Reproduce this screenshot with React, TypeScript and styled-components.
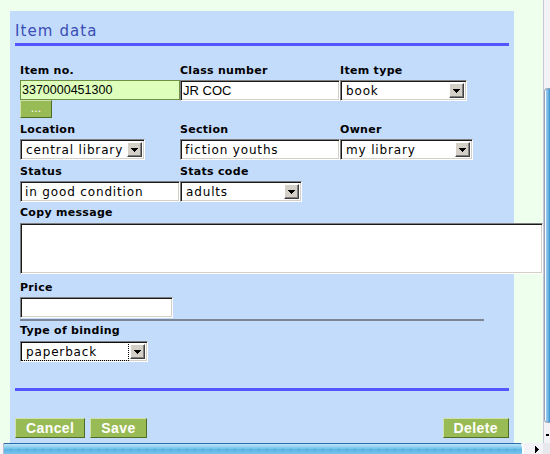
import React from "react";
import styled, { createGlobalStyle, css } from "styled-components";

const GlobalStyle = createGlobalStyle`
  html, body {
    margin: 0;
    padding: 0;
    background: #eeffee;
  }
  body {
    font-family: "DejaVu Sans", Verdana, sans-serif;
  }
`;

// classic sunken 2px field border
const inset = css`
  border: 1px solid;
  border-color: #808080 #ffffff #ffffff #808080;
  box-shadow: inset 1px 1px 0 #1a1a1a, inset -1px -1px 0 #d4d0c8;
`;

const Window = styled.div`
  display: grid;
  grid-template-columns: 543px 7px;
  grid-template-rows: 443px 11px;
  width: 550px;
  height: 454px;
  overflow: hidden;
`;

const Viewport = styled.div`
  overflow: hidden;
  background: #eeffee;
  padding: 11px 0 0 10px;
`;

const Panel = styled.div`
  width: 504px;
  min-height: 460px;
  box-sizing: border-box;
  padding: 11px 5px 0;
  background: #c4dcfc;
`;

const Title = styled.h2`
  margin: 0;
  height: 18px;
  font: normal 15px/18px "DejaVu Sans", Verdana, sans-serif;
  letter-spacing: 1.1px;
  color: #3a4db3;
`;

const Rule = styled.div<{ $top: number }>`
  height: 3px;
  margin-top: ${(p) => p.$top}px;
  background: #5555ff;
`;

const Form = styled.div`
  display: flex;
  flex-direction: column;
  padding: 0 5px;
`;

const Row = styled.div<{ $top: number }>`
  display: grid;
  grid-template-columns: 160px 160px 1fr;
  align-items: start;
  margin-top: ${(p) => p.$top}px;
`;

const Field = styled.div<{ $top?: number }>`
  display: flex;
  flex-direction: column;
  align-items: flex-start;
  margin-top: ${(p) => p.$top ?? 0}px;
`;

const Label = styled.label<{ $gap?: number }>`
  display: block;
  height: 13px;
  margin-bottom: ${(p) => p.$gap ?? 3}px;
  font: bold 11px/13px "DejaVu Sans", Verdana, sans-serif;
  letter-spacing: 0.3px;
  color: #000;
  white-space: nowrap;
`;

const TextInput = styled.input<{ $width: number; $arial?: boolean }>`
  width: ${(p) => p.$width}px;
  height: 21px;
  box-sizing: border-box;
  margin: 0;
  padding: 0 4px;
  ${inset};
  background: #fff;
  color: #000;
  outline: none;
  ${(p) =>
    p.$arial
      ? css`
          font: 13px "Liberation Sans", Arial, sans-serif;
          padding-left: 2px;
        `
      : css`
          font: 12px "DejaVu Sans", Verdana, sans-serif;
          letter-spacing: 0.85px;
        `}
`;

const ItemNoInput = styled(TextInput)`
  height: 20px;
  border: 1px solid #6f8f45;
  box-shadow: none;
  background: #ddffbb;
  font-size: 12.5px;
  padding-left: 1px;
`;

const TextArea = styled.textarea`
  width: 523px;
  height: 51px;
  box-sizing: border-box;
  margin: 0;
  ${inset};
  background: #fff;
  resize: none;
  outline: none;
`;

const Divider = styled.div`
  width: 464px;
  height: 2px;
  margin-top: 1px;
  background: #7b8596;
`;

const SelectBox = styled.div<{ $width: number }>`
  display: flex;
  align-items: center;
  width: ${(p) => p.$width}px;
  height: 21px;
  box-sizing: border-box;
  padding: 1px 2px 1px 1px;
  ${inset};
  background: #fff;
`;

const SelectValue = styled.span<{ $focused?: boolean }>`
  flex: 1;
  align-self: stretch;
  display: flex;
  align-items: center;
  padding-left: 4px;
  margin-right: 2px;
  font: 12px "DejaVu Sans", Verdana, sans-serif;
  letter-spacing: 0.85px;
  color: #000;
  white-space: nowrap;
  ${(p) =>
    p.$focused &&
    css`
      outline: 1px dotted #000;
      outline-offset: 0;
    `}
`;

const ArrowButton = styled.span`
  width: 15px;
  height: 15px;
  box-sizing: border-box;
  display: flex;
  align-items: center;
  justify-content: center;
  background: #d4d0c8;
  border: 1px solid;
  border-color: #ffffff #404040 #404040 #ffffff;
  box-shadow: inset -1px -1px 0 #808080;
`;

const DownArrow = () => (
  <svg width={7} height={4} viewBox="0 0 7 4" shapeRendering="crispEdges">
    <rect x="0" y="0" width="7" height="1" fill="#000" />
    <rect x="1" y="1" width="5" height="1" fill="#000" />
    <rect x="2" y="2" width="3" height="1" fill="#000" />
    <rect x="3" y="3" width="1" height="1" fill="#000" />
  </svg>
);

const Select = ({ value, width, focused }: { value: string; width: number; focused?: boolean }) => (
  <SelectBox $width={width}>
    <SelectValue $focused={focused}>{value}</SelectValue>
    <ArrowButton>
      <DownArrow />
    </ArrowButton>
  </SelectBox>
);

const GreenButton = styled.button<{ $push?: boolean }>`
  height: 20px;
  box-sizing: border-box;
  margin: 0;
  padding: 0 10px;
  background: #99bb55;
  color: #fff;
  font: bold 14px/18px "Liberation Sans", Arial, sans-serif;
  letter-spacing: 0.4px;
  border: 1px solid;
  border-color: #cfe0a8 #4f6b28 #4f6b28 #cfe0a8;
  cursor: pointer;
  ${(p) => p.$push && "margin-left: auto;"}
`;

const LookupButton = styled(GreenButton)`
  width: 32px;
  height: 18px;
  padding: 0;
  font: 11px/16px "DejaVu Sans", Verdana, sans-serif;
  letter-spacing: 0;
`;

const ButtonBar = styled.div`
  display: flex;
  gap: 5px;
  margin-top: 27px;
`;

/* window scrollbars (the page is cut off at the right and bottom) */

const VScroll = styled.div`
  display: flex;
  flex-direction: column;
  padding-top: 88px;
  background: linear-gradient(to right, #c6cad6 0 1px, #f3f3f7 1px);
`;

const VThumb = styled.div`
  height: 333px;
  margin-left: 1px;
  border: 1px solid #9aa4b8;
  border-right: 0;
  border-radius: 4px 0 0 4px;
  background: linear-gradient(to right, #ffffff 0 1px, #9fd2f2 1px, #5aa8dc 4px, #3d8ccc);
`;

const VArrow = styled.div`
  flex: 1;
  display: flex;
  align-items: flex-end;
  padding: 0 0 6px 2px;
`;

const HScroll = styled.div`
  display: flex;
  background: #f3f3f7;
`;

const HStub = styled.div`
  width: 3px;
  background: #f6f6f8;
  border-right: 1px solid #b8bcc8;
`;

const HThumb = styled.div`
  width: 518px;
  border-top: 1px solid #2c6aa8;
  border-right: 2px solid #ffffff;
  border-radius: 0 5px 0 0;
  background:
    repeating-linear-gradient(to right, transparent 0 6px, rgba(40, 110, 170, 0.35) 6px 8px) 0 5px / 100% 1px no-repeat,
    linear-gradient(to bottom, #bfe6fa, #8ed0f0 3px, #5cb4e4 6px, #7cc4ec);
`;

const HArrow = styled.div`
  flex: 1;
  display: flex;
  align-items: center;
  justify-content: center;
  padding: 2px 0 0 6px;
`;

const Corner = styled.div`
  background: #e6e8ee;
`;

const RightArrow = () => (
  <svg width={4} height={7} viewBox="0 0 4 7" shapeRendering="crispEdges">
    <rect x="0" y="0" width="1" height="7" fill="#000" />
    <rect x="1" y="1" width="1" height="5" fill="#000" />
    <rect x="2" y="2" width="1" height="3" fill="#000" />
    <rect x="3" y="3" width="1" height="1" fill="#000" />
  </svg>
);

export default function App() {
  return (
    <>
      <GlobalStyle />
      <Window>
        <Viewport>
          <Panel>
            <Title>Item data</Title>
            <Rule $top={3} />

            <Form>
              <Row $top={18}>
                <Field>
                  <Label>Item no.</Label>
                  <ItemNoInput $width={160} $arial value="3370000451300" readOnly />
                  <LookupButton>...</LookupButton>
                </Field>
                <Field>
                  <Label>Class number</Label>
                  <TextInput $width={160} $arial value="JR COC" readOnly />
                </Field>
                <Field>
                  <Label>Item type</Label>
                  <Select value="book" width={127} />
                </Field>
              </Row>

              <Row $top={5}>
                <Field>
                  <Label>Location</Label>
                  <Select value="central library" width={125} />
                </Field>
                <Field>
                  <Label>Section</Label>
                  <TextInput $width={160} value="fiction youths" readOnly />
                </Field>
                <Field>
                  <Label>Owner</Label>
                  <Select value="my library" width={133} />
                </Field>
              </Row>

              <Row $top={5}>
                <Field>
                  <Label>Status</Label>
                  <TextInput $width={160} value="in good condition" readOnly />
                </Field>
                <Field>
                  <Label>Stats code</Label>
                  <Select value="adults" width={122} />
                </Field>
              </Row>

              <Field $top={4}>
                <Label $gap={4}>Copy message</Label>
                <TextArea />
              </Field>

              <Field $top={7}>
                <Label>Price</Label>
                <TextInput $width={153} value="" readOnly />
              </Field>
              <Divider />

              <Field $top={3}>
                <Label $gap={4}>Type of binding</Label>
                <Select value="paperback" width={128} focused />
              </Field>
            </Form>

            <Rule $top={26} />

            <ButtonBar>
              <GreenButton>Cancel</GreenButton>
              <GreenButton>Save</GreenButton>
              <GreenButton $push>Delete</GreenButton>
            </ButtonBar>
          </Panel>
        </Viewport>

        <VScroll>
          <VThumb />
          <VArrow>
            <DownArrow />
          </VArrow>
        </VScroll>

        <HScroll>
          <HStub />
          <HThumb />
          <HArrow>
            <RightArrow />
          </HArrow>
        </HScroll>
        <Corner />
      </Window>
    </>
  );
}
